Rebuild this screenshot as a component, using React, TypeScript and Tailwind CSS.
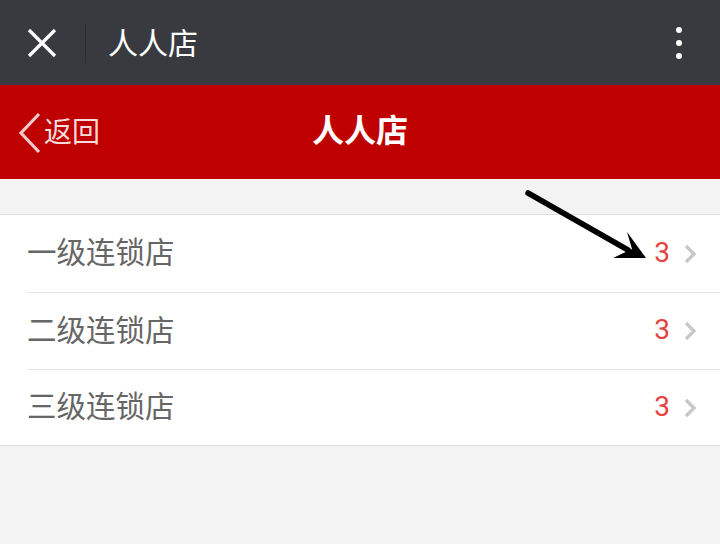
import React from "react";

const font = { fontFamily: '"Noto Sans CJK SC", "Noto Sans", sans-serif' };

function Row({ label, h, last }: { label: string; h: string; last?: boolean }) {
  return (
    <div className={`flex ${h} items-center bg-white pl-[27px]`}>
      <div className={`flex h-full flex-1 items-center pb-[5px] pr-[23px] ${last ? "" : "border-b border-[#e5e5e5]"}`}>
        <span className="flex-1 text-[29.5px] leading-none text-[#666666]">{label}</span>
        <span className="mt-[3px] text-[28px] leading-none text-[#e64340]" style={{ fontFamily: '"Roboto", sans-serif', fontWeight: 400 }}>3</span>
        <svg width="13" height="20" viewBox="0 0 13 20" className="ml-[14px] mt-[5px]">
          <path d="M2 2 L10 10 L2 18" fill="none" stroke="#c7c7cc" strokeWidth="3.2" />
        </svg>
      </div>
    </div>
  );
}

export default function App() {
  return (
    <div className="relative h-[544px] w-[720px] overflow-hidden bg-[#f3f3f3]" style={font}>
      <div className="flex h-[85px] items-center bg-[#393a3f]">
        <div className="flex w-[85px] items-center justify-center">
          <svg width="30" height="30" viewBox="0 0 30 30" className="ml-[-2px]">
            <path d="M2 2 L28 28 M28 2 L2 28" stroke="#ffffff" strokeWidth="3.2" />
          </svg>
        </div>
        <div className="h-[40px] w-px bg-[#2c2d31]" />
        <div className="ml-[22px] flex-1 pb-[3px] text-[30px] leading-none text-white">人人店</div>
        <div className="mr-[38px] flex flex-col items-center gap-[7px]">
          <div className="h-[6px] w-[6px] rounded-full bg-white" />
          <div className="h-[6px] w-[6px] rounded-full bg-white" />
          <div className="h-[6px] w-[6px] rounded-full bg-white" />
        </div>
      </div>
      <div className="relative flex h-[94px] items-center justify-center bg-[#bf0000] pb-[8px]">
        <div className="absolute left-[17px] top-[27px] flex items-center">
          <svg width="26" height="42" viewBox="0 0 26 42">
            <path d="M22 2 L4 21 L22 40" fill="none" stroke="#f2c9c9" strokeWidth="3.2" />
          </svg>
          <span className="ml-[1px] mb-[6px] text-[28px] leading-none text-[#f6dcdc]">返回</span>
        </div>
        <span className="text-[32px] font-bold leading-none text-white">人人店</span>
      </div>
      <div className="h-[35px]" />
      <div className="border-y border-[#e0e0e0]">
        <Row label="一级连锁店" h="h-[78px]" />
        <Row label="二级连锁店" h="h-[77px]" />
        <Row label="三级连锁店" h="h-[75px]" last />
      </div>
      <svg className="absolute left-0 top-0" width="720" height="544" viewBox="0 0 720 544">
        <line x1="528" y1="193" x2="628" y2="250" stroke="#000" strokeWidth="5.5" strokeLinecap="round" />
        <path d="M646 258 L627 232 L632 249 L613 258 Z" fill="#000" />
      </svg>
    </div>
  );
}
